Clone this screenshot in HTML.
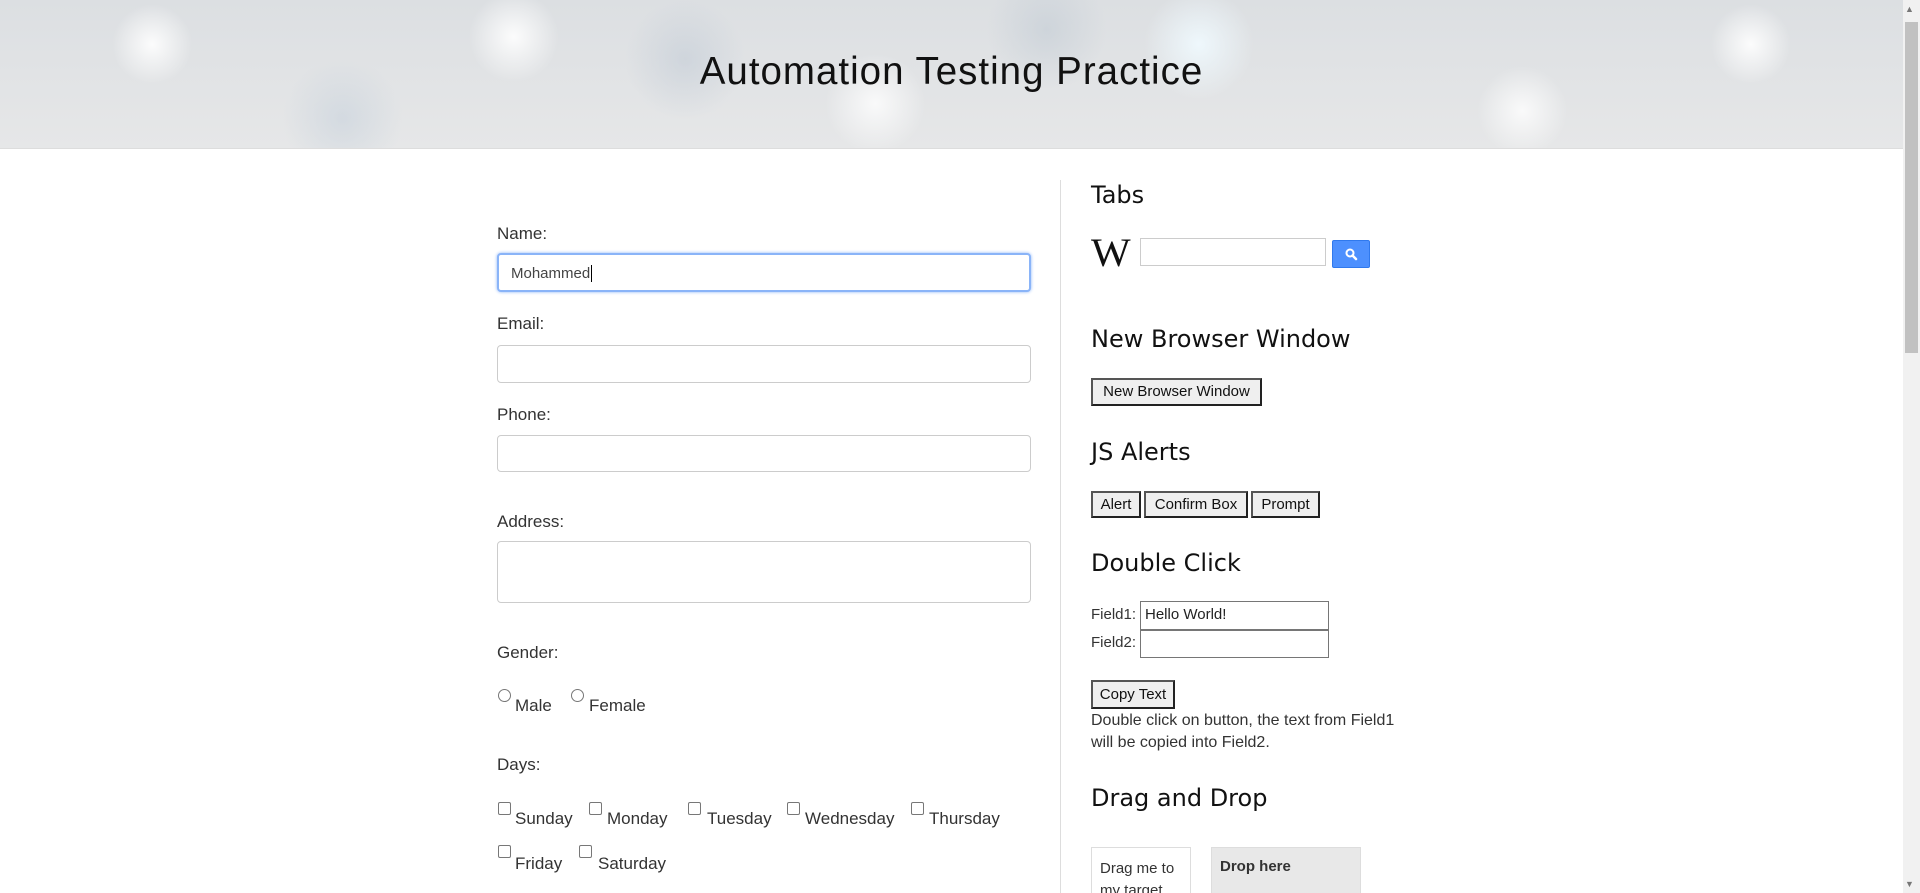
<!DOCTYPE html>
<html><head><meta charset="utf-8">
<style>
*{box-sizing:border-box;margin:0;padding:0}
html,body{width:1920px;height:893px;overflow:hidden}
body{background:#fff;font-family:"Liberation Sans",sans-serif;color:#222;position:relative}
.a{position:absolute;white-space:nowrap}
#hdr{position:absolute;left:0;top:0;width:1903px;height:149px;border-bottom:1px solid #ddd;
background:
radial-gradient(circle at 8% 30%,rgba(255,255,255,.9) 0,rgba(255,255,255,0) 40px),
radial-gradient(circle at 27% 25%,rgba(255,255,255,.9) 0,rgba(255,255,255,0) 45px),
radial-gradient(circle at 46% 70%,rgba(255,255,255,.8) 0,rgba(255,255,255,0) 50px),
radial-gradient(circle at 63% 30%,rgba(240,250,255,.9) 0,rgba(255,255,255,0) 55px),
radial-gradient(circle at 80% 75%,rgba(255,255,255,.8) 0,rgba(255,255,255,0) 45px),
radial-gradient(circle at 92% 30%,rgba(255,255,255,.9) 0,rgba(255,255,255,0) 40px),
radial-gradient(circle at 18% 80%,rgba(200,210,220,.6) 0,rgba(200,210,220,0) 60px),
radial-gradient(circle at 55% 20%,rgba(190,200,210,.5) 0,rgba(190,200,210,0) 60px),
radial-gradient(circle at 36% 40%,rgba(190,200,212,.5) 0,rgba(190,200,212,0) 60px),
linear-gradient(#dcdfe2,#e6e7e8)}
h2{position:absolute;font-family:"DejaVu Sans",sans-serif;font-weight:normal;font-size:24px;color:#111;white-space:nowrap}
.lbl{font-size:17px;color:#333}
.inp{position:absolute;border:1px solid #ccc;border-radius:4px;background:#fff}
.btn{position:absolute;border:2px solid #222;border-top-color:#555;border-left-color:#555;background:#efefef;font-size:15px;color:#111;text-align:center;line-height:23px}
.rb{position:absolute;width:13px;height:13px;border:1px solid #777;border-radius:50%;background:#fff}
.cb{position:absolute;width:13px;height:13px;border:1px solid #777;border-radius:2px;background:#fff}
.fld{position:absolute;border:1px solid #767676;background:#fff;font-size:15px;padding-left:4px;line-height:26px}
</style></head><body>
<div id="hdr"></div>
<div class="a" style="left:0;width:1903px;top:50px;text-align:center;font-size:38.5px;color:#111;letter-spacing:1px">Automation Testing Practice</div>
<div style="position:absolute;left:1903px;top:0;width:17px;height:893px;background:#f1f1f1"></div>
<div style="position:absolute;left:1905px;top:22px;width:13px;height:331px;background:#c1c1c1"></div>
<div class="a" style="left:1905px;top:4px;font-size:9px;color:#777">▲</div>
<div class="a" style="left:1905px;top:879px;font-size:9px;color:#777">▼</div>

<div style="position:absolute;left:1060px;top:180px;width:1px;height:713px;background:#ddd"></div>

<div class="a lbl" style="left:497px;top:224px">Name:</div>
<div class="inp" style="left:497px;top:253px;width:534px;height:39px;border:2px solid #8ab4f8;box-shadow:0 0 3px #8ab4f8;font-size:15px;color:#444;padding-left:12px;line-height:37px">Mohammed<span style="border-left:1px solid #000;margin-left:1px"></span></div>
<div class="a lbl" style="left:497px;top:314px">Email:</div>
<div class="inp" style="left:497px;top:345px;width:534px;height:38px"></div>
<div class="a lbl" style="left:497px;top:405px">Phone:</div>
<div class="inp" style="left:497px;top:435px;width:534px;height:37px"></div>
<div class="a lbl" style="left:497px;top:512px">Address:</div>
<div class="inp" style="left:497px;top:541px;width:534px;height:62px"></div>
<div class="a lbl" style="left:497px;top:643px">Gender:</div>
<div class="rb" style="left:498px;top:689px"></div><div class="a lbl" style="left:515px;top:696px">Male</div>
<div class="rb" style="left:571px;top:689px"></div><div class="a lbl" style="left:589px;top:696px">Female</div>
<div class="a lbl" style="left:497px;top:755px">Days:</div>
<div class="cb" style="left:498px;top:802px"></div><div class="a lbl" style="left:515px;top:809px">Sunday</div>
<div class="cb" style="left:589px;top:802px"></div><div class="a lbl" style="left:607px;top:809px">Monday</div>
<div class="cb" style="left:688px;top:802px"></div><div class="a lbl" style="left:707px;top:809px">Tuesday</div>
<div class="cb" style="left:787px;top:802px"></div><div class="a lbl" style="left:805px;top:809px">Wednesday</div>
<div class="cb" style="left:911px;top:802px"></div><div class="a lbl" style="left:929px;top:809px">Thursday</div>
<div class="cb" style="left:498px;top:845px"></div><div class="a lbl" style="left:515px;top:854px">Friday</div>
<div class="cb" style="left:579px;top:845px"></div><div class="a lbl" style="left:598px;top:854px">Saturday</div>

<h2 style="left:1091px;top:181px">Tabs</h2>
<div class="a" style="left:1091px;top:229px;font-family:'Liberation Serif',serif;font-size:40px;color:#111;transform:scaleX(1.05);transform-origin:left">W</div>
<div class="inp" style="left:1140px;top:238px;width:186px;height:28px;border-radius:0"></div>
<div style="position:absolute;left:1332px;top:240px;width:38px;height:28px;background:#4d90fe;border:1px solid #3079ed;border-radius:2px">
<svg width="38" height="28" viewBox="0 0 38 28"><circle cx="17" cy="12" r="3.5" fill="none" stroke="#fff" stroke-width="2"/><path d="M19.5 14.5 L23 18" stroke="#fff" stroke-width="2.5" stroke-linecap="round"/></svg></div>

<h2 style="left:1091px;top:325px">New Browser Window</h2>
<div class="btn" style="left:1091px;top:378px;width:171px;height:28px">New Browser Window</div>
<h2 style="left:1091px;top:438px">JS Alerts</h2>
<div class="btn" style="left:1091px;top:491px;width:50px;height:27px">Alert</div>
<div class="btn" style="left:1144px;top:491px;width:104px;height:27px">Confirm Box</div>
<div class="btn" style="left:1251px;top:491px;width:69px;height:27px">Prompt</div>
<h2 style="left:1091px;top:549px">Double Click</h2>
<div class="a" style="left:1091px;top:606px;font-size:15px;color:#333">Field1:</div>
<div class="fld" style="left:1140px;top:601px;width:189px;height:29px">Hello World!</div>
<div class="a" style="left:1091px;top:634px;font-size:15px;color:#333">Field2:</div>
<div class="fld" style="left:1140px;top:630px;width:189px;height:28px"></div>
<div class="btn" style="left:1091px;top:680px;width:84px;height:29px;line-height:25px">Copy Text</div>
<div class="a" style="left:1091px;top:710px;font-size:16px;color:#333;line-height:22px">Double click on button, the text from Field1<br>will be copied into Field2.</div>
<h2 style="left:1091px;top:784px">Drag and Drop</h2>
<div style="position:absolute;left:1091px;top:847px;width:100px;height:46px;overflow:hidden;border:1px solid #ddd;border-bottom:none;padding:10px 8px 0;font-size:15px;color:#333;line-height:22px">Drag me to my target</div>
<div style="position:absolute;left:1211px;top:847px;width:150px;height:46px;overflow:hidden;border:1px solid #ddd;border-bottom:none;background:#e8e8e8;padding:10px 8px 0;font-size:15px;font-weight:bold;color:#333">Drop here</div>
</body></html>
